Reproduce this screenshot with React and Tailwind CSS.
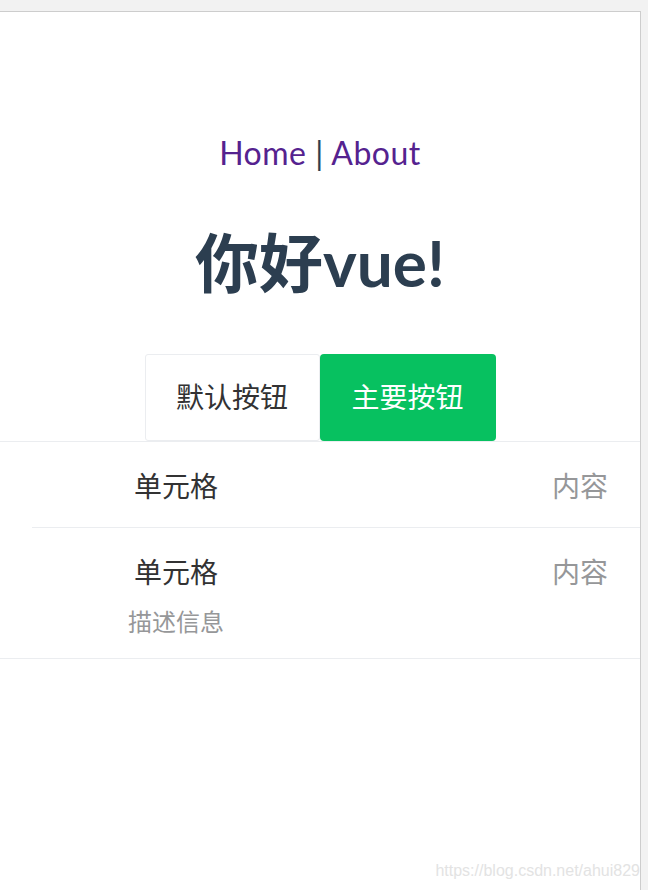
const Cell = ({ title, value, label, last }) => {
  return (
    <div className="relative flex px-8 py-[19px]">
      <div className="flex-1 text-center">
        <div className="text-[28px] leading-[48px] text-[#323233]">{title}</div>
        {label && <div className="mt-[8px] text-[24px] leading-[36px] text-[#969799]">{label}</div>}
      </div>
      <div className="flex-1 text-right text-[28px] leading-[48px] text-[#969799]">{value}</div>
      {!last && <div className="absolute bottom-0 left-8 right-0 h-px bg-[#ebedf0]" />}
    </div>
  )
}

const App = () => {
  return (
    <div className="min-h-screen bg-[#f2f2f2] pt-[11px] pr-[7px]" style={{ fontFamily: '"Lato", "Noto Sans CJK SC", sans-serif' }}>
      <div className="relative h-[879px] bg-white border-t border-r border-[#cdcdcd] text-center text-[#2c3e50]">
        <div className="pt-[117px] text-[32px] leading-[48px] tracking-[0.5px]">
          <span className="text-[#55228f]">Home</span> | <span className="text-[#55228f]">About</span>
        </div>

        <h1 className="mt-[46px] text-[64px] leading-[80px] font-bold">你好vue!</h1>

        <div className="mt-[51px] flex justify-center" style={{ fontFamily: '"Noto Sans CJK SC", sans-serif' }}>
          <button className="w-[175px] h-[87px] rounded-[3px] border border-[#ebedf0] bg-white text-[28px] leading-[40px] pb-[3px] text-[#323233]">默认按钮</button>
          <button className="w-[176px] h-[87px] rounded-[4px] bg-[#07c160] text-[28px] leading-[40px] pb-[3px] text-white">主要按钮</button>
        </div>

        <div className="border-t border-b border-[#ebedf0]" style={{ fontFamily: '"Noto Sans CJK SC", sans-serif' }}>
          <Cell title="单元格" value="内容" />
          <Cell title="单元格" value="内容" label="描述信息" last />
        </div>

        <div className="absolute right-0 bottom-[7px] text-[16px] text-[#e3e3e3]" style={{ fontFamily: '"Liberation Sans", sans-serif' }}>
          https://blog.csdn.net/ahui829
        </div>
      </div>
    </div>
  )
}

export default App;
